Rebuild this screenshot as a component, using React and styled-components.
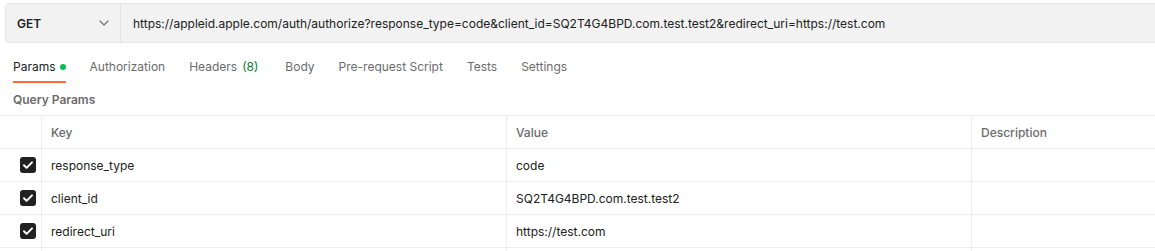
import React from 'react'
import styled, { createGlobalStyle } from 'styled-components'

const GlobalStyle = createGlobalStyle`
  html, body {
    margin: 0;
    padding: 0;
    background: #ffffff;
    overflow: hidden;
  }
  body {
    font-family: Inter, "Noto Sans", sans-serif;
    color: #212121;
    -webkit-font-smoothing: antialiased;
  }
`;

const Page = styled.div`
  width: 1155px;
  height: 251px;
  overflow: hidden;
  padding-top: 3px;
  box-sizing: border-box;
`;

const UrlBar = styled.div`
  display: flex;
  align-items: stretch;
  height: 40px;
  margin-left: 5px;
  margin-right: -8px;
  box-sizing: border-box;
  background: #f2f2f2;
  border: 1px solid #e6e6e6;
  border-radius: 4px;
`;

const Method = styled.div`
  width: 115px;
  box-sizing: border-box;
  display: flex;
  align-items: center;
  justify-content: space-between;
  padding: 0 11px 0 11px;
  border-right: 1px solid #e3e3e3;
  font-size: 12px;
  font-weight: 600;
  color: #212121;
`;

const UrlText = styled.div`
  display: flex;
  align-items: center;
  padding-left: 12px;
  font-size: 12px;
  color: #212121;
  white-space: nowrap;
`;

const Tabs = styled.div`
  display: flex;
  align-items: stretch;
  gap: 24px;
  height: 31px;
  margin-top: 9px;
  padding-left: 13px;
`;

const Tab = styled.div`
  display: flex;
  align-items: center;
  gap: ${p => (p.$active ? 4 : 5)}px;
  box-sizing: border-box;
  height: 31px;
  font-size: 12px;
  color: ${p => (p.$active ? '#212121' : '#6b6b6b')};
  border-bottom: 2px solid ${p => (p.$active ? '#ff6c37' : 'transparent')};
  margin-right: ${p => p.$extra || 0}px;
  white-space: nowrap;
`;

const Dot = styled.span`
  width: 6px;
  height: 6px;
  border-radius: 50%;
  background: #0cbb52;
`;

const Count = styled.span`
  color: #007f31;
`;

const Section = styled.div`
  height: 32px;
  display: flex;
  align-items: center;
  padding-left: 13px;
  font-size: 12px;
  font-weight: 600;
  color: #6b6b6b;
`;

const Table = styled.div`
  border-top: 1px solid #ededed;
  margin-right: -8px;
`;

const Row = styled.div`
  display: grid;
  grid-template-columns: 41px 465px 465px 1fr;
  height: 33px;
  box-sizing: border-box;
  border-bottom: 1px solid #ededed;
`;

const Cell = styled.div`
  display: flex;
  align-items: center;
  padding-left: ${p => (p.$check ? 0 : 9)}px;
  justify-content: ${p => (p.$check ? 'flex-end' : 'flex-start')};
  padding-right: ${p => (p.$check ? 5 : 0)}px;
  border-left: ${p => (p.$first ? 'none' : '1px solid #ededed')};
  font-size: 12px;
  font-weight: ${p => (p.$head ? 500 : 400)};
  color: ${p => (p.$head ? '#6b6b6b' : '#212121')};
  white-space: nowrap;
  overflow: hidden;
`;

const Chevron = () => (
  <svg width="10" height="6" viewBox="0 0 10 6" fill="none">
    <path d="M1 1l4 4 4-4" stroke="#6b6b6b" strokeWidth="1.1" strokeLinecap="round" strokeLinejoin="round" />
  </svg>
);

const Checkbox = () => (
  <svg width="16" height="16" viewBox="0 0 16 16">
    <rect x="0" y="0" width="16" height="16" rx="3" fill="#212121" />
    <path d="M4 8.3l2.6 2.6L12 5.4" stroke="#ffffff" strokeWidth="2" fill="none" strokeLinecap="round" strokeLinejoin="round" />
  </svg>
);

const params = [
  { key: 'response_type', value: 'code' },
  { key: 'client_id', value: 'SQ2T4G4BPD.com.test.test2' },
  { key: 'redirect_uri', value: 'https://test.com' },
];

const App = () => {
  return (
    <Page>
      <GlobalStyle />
      <UrlBar>
        <Method>
          GET
          <Chevron />
        </Method>
        <UrlText>
          https://appleid.apple.com/auth/authorize?response_type=code&amp;client_id=SQ2T4G4BPD.com.test.test2&amp;redirect_uri=https://test.com
        </UrlText>
      </UrlBar>

      <Tabs>
        <Tab $active>
          Params<Dot />
        </Tab>
        <Tab>Authorization</Tab>
        <Tab $extra={3}>
          Headers<Count>(8)</Count>
        </Tab>
        <Tab>Body</Tab>
        <Tab>Pre-request Script</Tab>
        <Tab>Tests</Tab>
        <Tab>Settings</Tab>
      </Tabs>

      <Section>Query Params</Section>

      <Table>
        <Row>
          <Cell $first />
          <Cell $head>Key</Cell>
          <Cell $head>Value</Cell>
          <Cell $head>Description</Cell>
        </Row>
        {params.map(p => (
          <Row key={p.key}>
            <Cell $first $check>
              <Checkbox />
            </Cell>
            <Cell>{p.key}</Cell>
            <Cell>{p.value}</Cell>
            <Cell />
          </Row>
        ))}
        <Row>
          <Cell $first />
          <Cell />
          <Cell />
          <Cell />
        </Row>
      </Table>
    </Page>
  )
}

export default App
